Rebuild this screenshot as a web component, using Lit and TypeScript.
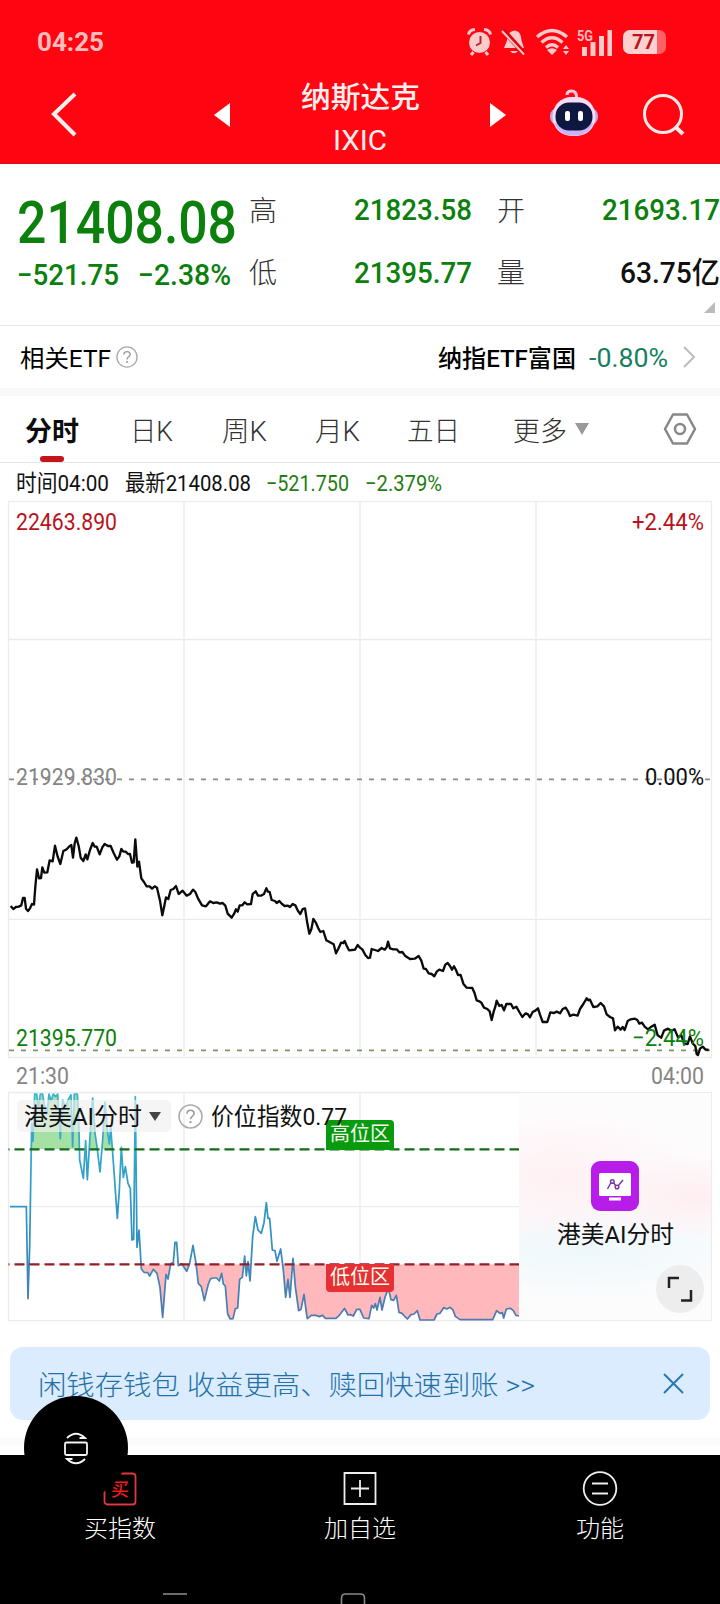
import { LitElement, html, svg, css } from "lit";
import { customElement } from "lit/decorators.js";

/** A line of text drawn in a box of given width, with its baseline at `base`. */
const fit = (text: string, w: number, size: number, h: number, base: number, cls = "") => html`
  <svg class="fit ${cls}" width=${w} height=${h}>
    <text x="0" y=${base} font-size=${size} textLength=${w} lengthAdjust="spacingAndGlyphs">${text}</text>
  </svg>`;

const label = (text: string, x: number, y: number, w: number, size: number, cls = "") => svg`
  <text class=${cls} x=${x} y=${y} font-size=${size} textLength=${w} lengthAdjust="spacingAndGlyphs">${text}</text>`;

/* Price samples, in thirds of a pixel from (0, 760). */
const PRICE =
  "32,438 40,447 48,441 56,440 64,436 69,414 74,414 78,446 84,453 90,445 96,432 102,434 106,380 111,328 117,355 123,354 127,322 133,338 142,337 149,301 158,304 165,257 173,290 181,312 190,273 200,268 207,260 214,255 219,293 224,250 229,233 236,258 242,293 250,303 257,283 262,298 270,270 278,249 284,260 290,260 299,283 307,262 314,252 324,258 332,258 341,279 351,299 358,289 364,267 370,275 377,275 384,282 390,282 396,308 401,307 406,238 412,320 417,305 424,355 432,366 440,379 449,379 456,386 464,379 471,383 480,422 487,466 493,437 498,412 505,417 512,390 520,387 528,378 536,402 548,392 560,407 570,402 579,389 586,396 594,415 606,436 618,439 630,424 640,429 650,427 660,431 668,429 676,437 683,461 695,473 702,462 708,448 713,455 719,436 727,436 734,427 742,433 753,432 758,402 767,394 774,407 783,407 792,402 799,385 804,395 809,396 815,420 825,423 830,429 838,423 846,432 854,438 864,437 870,441 878,432 886,436 894,453 901,462 908,447 915,445 922,490 928,521 934,508 940,477 947,487 955,505 961,516 970,513 979,541 990,547 1001,553 1008,580 1015,566 1023,548 1030,549 1034,543 1040,557 1047,571 1056,570 1065,569 1073,555 1080,563 " +
  "1087,568 1096,585 1104,594 1110,593 1115,567 1125,570 1134,573 1145,564 1154,569 1160,562 1164,545 1170,565 1180,568 1190,568 1198,577 1207,576 1215,587 1230,597 1244,596 1256,588 1264,602 1271,626 1278,627 1286,640 1295,642 1303,649 1310,635 1318,629 1329,633 1336,614 1343,609 1350,618 1356,629 1362,619 1368,630 1374,645 1382,645 1390,671 1400,683 1417,684 1424,700 1430,721 1438,724 1444,728 1452,743 1462,747 1469,754 1475,780 1481,755 1486,740 1490,722 1498,738 1505,735 1512,751 1519,732 1533,732 1540,745 1549,740 1558,756 1567,771 1577,760 1584,763 1590,772 1598,756 1606,752 1614,745 1620,764 1628,786 1642,786 1651,757 1662,759 1670,755 1680,760 1688,747 1697,743 1704,754 1710,768 1720,764 1733,767 1740,747 1750,732 1760,715 1766,721 1770,719 1780,741 1792,739 1802,729 1812,739 1820,763 1830,771 1839,775 1845,811 1853,800 1862,809 1868,801 1874,810 1883,783 1892,778 1905,776 1912,780 1918,791 1926,788 1934,800 1944,808 1954,800 1964,794 1973,826 1984,833 1992,812 2004,806 2014,812 2024,808 2034,832 2044,826 2052,850 2063,852 2070,829 2078,850 2086,858 2090,882 2094,885 2100,866 2108,860 2116,868 2126,870";

/* Indicator samples, in thirds of a pixel from (0, 1080). */
const INDEX =
  "30,380 79,380 84,656 89,500 95,130 99,184 104,42 110,42 115,84 121,42 128,42 134,84 141,100 147,42 153,62 160,42 167,50 173,42 181,176 188,60 196,85 203,62 213,44 218,200 223,42 232,42 236,110 239,240 250,295 257,182 262,299 270,170 278,54 285,160 291,200 300,276 308,180 315,66 322,150 328,192 332,140 341,260 352,415 358,330 364,202 370,292 376,260 384,310 391,326 396,480 401,478 406,50 411,502 417,450 424,567 432,577 443,578 449,588 455,577 460,568 471,580 480,622 488,712 498,583 504,597 512,552 520,547 525,487 530,487 535,557 545,551 560,574 569,550 579,496 588,550 595,610 604,620 613,662 625,612 632,596 642,594 650,594 658,603 665,580 670,612 676,618 683,702 691,717 699,716 706,686 713,684 719,598 727,592 734,528 739,588 744,545 750,603 758,470 766,410 774,450 784,460 792,428 799,368 804,415 809,415 817,510 825,512 831,544 842,507 850,570 857,652 864,598 870,652 879,535 886,620 896,692 903,688 912,643 918,690 922,716 934,706 948,706 958,710 968,706 976,715 1008,715 1018,706 1034,685 1044,705 1052,704 1060,708 1070,688 1080,688 " +
  "1091,714 1107,716 1115,676 1121,684 1126,671 1131,690 1140,652 1146,690 1155,652 1165,625 1173,659 1181,661 1189,646 1197,697 1206,700 1213,708 1222,717 1233,704 1242,702 1252,692 1260,720 1302,720 1311,702 1320,700 1331,683 1340,687 1350,682 1359,690 1366,709 1380,719 1478,719 1490,692 1500,700 1507,698 1511,714 1519,687 1532,685 1540,692 1548,706 1557,708";

const chevronLeft = svg`<path d="M24 3 3 23 24 44" fill="none" stroke="#fff0ee" stroke-width="4"/>`;

const help = (r: number) => html`
  <svg width=${r * 2 + 2} height=${r * 2 + 2} viewBox="-12 -12 24 24">
    <circle r="11" fill="none" stroke="#aaa" stroke-width="1.5"/>
    <path d="M-3.4-2.6C-3.4-7 3.6-7 3.5-2.8 3.4-.4 0 0 0 2.6" fill="none" stroke="#999" stroke-width="1.5"/>
    <circle cy="5.4" r="1.1" fill="#999"/>
  </svg>`;

@customElement("app-root")
export class AppRoot extends LitElement {
  static styles = css`
    :host {
      display: block;
      position: relative;
      width: 720px;
      height: 1604px;
      overflow: hidden;
      background: #fff;
      font-family: Roboto, "Noto Sans CJK SC", sans-serif;
    }
    * { box-sizing: border-box; }
    svg { display: block; flex: none; overflow: visible; }
    text { fill: currentColor; font-family: Roboto, "Noto Sans CJK SC", sans-serif; }
    .green { color: #0c800c; }
    .dark { color: #111; }
    .mid { font-weight: 500; }
    .bold { font-weight: 700; }
    .light { font-weight: 300; }
    .head { height: 164px; background: #ff0511; color: #fff0ee; border-bottom: 1px solid #d4121c; }
    .status { display: flex; align-items: center; height: 84px; padding: 0 53px 0 37px; color: #ffbcbc; }
    .status .grow { flex: 1; }
    .sicons { display: flex; gap: 10px; align-items: center; }
    .signal { margin-left: -3px; }
    .titlebar { display: grid; grid-template-columns: 214px 86px 190px 60px 93px 77px; height: 79px; }
    .back { padding: 7px 0 0 51px; }
    .tri { padding-top: 19px; }
    .title { width: 120px; display: flex; flex-direction: column; align-items: center; margin-top: -5px; }
    .robot { padding-top: 5px; }
    .search { padding-top: 9px; }
    .quote { height: 162px; display: grid; grid-template-columns: 237px 40px 195px 53px 195px; grid-template-rows: 79px 82px; border-bottom: 1px solid #e6e6e6; }
    .quote > div { display: flex; }
    .big { padding-left: 17px; }
    .right { justify-content: flex-end; }
    .key { justify-content: flex-end; color: #333; }
    .chg { padding-left: 17px; gap: 19px; }
    .vol { flex-direction: column; align-items: flex-end; }
    .corner { margin-right: 5px; margin-top: 19px; }
    .etf { height: 62px; display: flex; align-items: center; padding: 0 25px 0 20px; }
    .etf .q { margin-left: 5px; }
    .etf .grow { flex: 1; }
    .etf .pct { color: #168060; margin: 0 15px 0 13px; }
    .band { height: 8px; background: #f8f8f9; }
    .tabs { height: 67px; display: flex; border-bottom: 1px solid #e8e8e8; padding-left: 25px; color: #333; }
    .tab { width: 54px; height: 66px; display: flex; flex-direction: column; align-items: center; color: #0c0c0c; }
    .bar { width: 24px; height: 6px; border-radius: 3px; background: #c5151c; }
    .t1 { margin-left: 51px; }
    .t2 { margin-left: 49px; }
    .t3 { margin-left: 48px; }
    .t4 { margin-left: 47px; }
    .t5 { margin-left: 53px; }
    .drop { margin: 27px 0 0 8px; }
    .gear { margin: 17px 0 0 75px; }
    .info { height: 38px; display: flex; padding-left: 16px; color: #111; }
    .info .n1 { margin-left: 16px; }
    .info .n2 { margin-left: 15px; color: #1f7d12; }
    .info .n3 { margin-left: 16px; color: #1f7d12; }
    .red { color: #b8141d; }
    .grey { color: #858585; }
    .axis { height: 35px; padding: 0 16px; display: flex; justify-content: space-between; color: #858585; }
    .ind { position: relative; height: 230px; display: flex; padding-right: 8px; }
    .picker { position: absolute; left: 17px; top: 8px; display: flex; align-items: center; }
    .pill { display: flex; align-items: center; gap: 7px; width: 154px; height: 32px; padding-left: 7px; border-radius: 5px; background: rgba(240, 240, 240, .66); color: #111; }
    .picker .q { margin: 0 8px 0 7px; }
    .promo { width: 193px; height: 229px; border: 1px solid #ececec; border-left: 0; display: flex; flex-direction: column; align-items: center; padding-top: 68px;
      background: radial-gradient(ellipse 150px 70px at 20% 38%, #fff0f3 0, #fff3f500 100%), radial-gradient(ellipse 110px 44px at 92% 46%, #ffedf1 0, #fff0f300 100%), radial-gradient(ellipse 190px 52px at 35% 69%, #edf8fb 0, #f0f8fb00 100%), #fdfcfd; }
    .expand { align-self: flex-end; margin-right: 7px; margin-top: 11px; }
    .gap { height: 25px; }
    .banner { margin: 0 10px; height: 73px; border-radius: 13px; background: #daecfd; color: #2470a8; display: flex; align-items: center; padding: 0 26px 0 28px; justify-content: space-between; }
    .foot { height: 35px; background: linear-gradient(#fff 17px, #fafafa 18px, #fafafa 25px, #fff 26px); }
    .nav { height: 149px; background: #000; color: #fff; display: grid; grid-template-columns: 240px 240px 240px; grid-template-rows: 137px 12px; }
    .item { display: flex; flex-direction: column; align-items: center; padding-top: 16px; gap: 3px; }
    .sys { grid-column: 1 / 4; }
    .fab { position: absolute; left: 24px; top: 1396px; }
  `;

  render() {
    return html`
      <div class="head">
        <div class="status">
          ${fit("04:25", 67, 25, 30, 24, "bold")}
          <div class="grow"></div>
          <div class="sicons">
            <svg width="25" height="28" viewBox="0 0 25 28">
              <circle cx="12.5" cy="14.5" r="10.5" fill="#ffcaca"/>
              <path d="M1.5 6.5Q2.5 2 8 1.6M23.5 6.5Q22.5 2 17 1.6M6.5 24 4 27M18.5 24 21 27" stroke="#ffcaca" stroke-width="3" fill="none"/>
              <path d="M13.5 8v7L9 17.5" stroke="#b02830" stroke-width="2" fill="none"/>
            </svg>
            <svg width="24" height="26" viewBox="0 0 24 26">
              <path d="M12.5 1.500c6 1 6.500 5 7 10l2.500 7.500H2l3-7.500c.3-5 1.500-9 7.500-10zM8 22h8q-4 4.500-8 0z" fill="#ffcaca"/>
              <path d="M1 1 22.5 25" stroke="#e00510" stroke-width="5"/><path d="M0 2 22 25.5" stroke="#ffcaca" stroke-width="2"/>
            </svg>
            <svg width="34" height="26" viewBox="0 0 34 26">
              <g fill="none" stroke="#ffcaca" stroke-width="3.400"><path d="M1 8Q16-5 31 8"/><path d="M5.5 13.500Q16 4 26.500 13.500"/><path d="M10 18.500Q16 13 22 18.500"/></g>
              <path d="m11 21q5-3.500 10 0l-5 5z" fill="#ffcaca"/><path d="m27 20 3-4 3 4zM27 22h6l-3 4z" fill="#ffcaca"/>
            </svg>
            <svg width="36" height="27" viewBox="0 0 36 27" class="bold signal">
              <text x="0" y="12" font-size="14" textLength="16" lengthAdjust="spacingAndGlyphs">5G</text>
              <path d="M5 18h5v9H5zM13.500 13h5v14h-5zM22 7h5v20h-5zM30.500 1h4.500v26h-4.500z" fill="#ffcaca"/>
            </svg>
            <svg width="44" height="26" viewBox="0 0 44 26" class="bold">
              <rect y="1" width="43" height="24" rx="7" fill="#ff6066"/>
              <path d="M7 1h27v24H7a7 7 0 0 1-7-7V8a7 7 0 0 1 7-7z" fill="#ffd0d0"/>
              <text class="red" x="9" y="20" font-size="20" textLength="23">77</text>
            </svg>
          </div>
        </div>
        <div class="titlebar">
          <div class="back"><svg width="26" height="46">${chevronLeft}</svg></div>
          <div class="tri"><svg width="17" height="24"><path d="M0 12 16 0V24z" fill="#fff"/></svg></div>
          <div class="title">
            ${fit("纳斯达克", 119, 29, 33, 29, "mid")}
            ${fit("IXIC", 54, 27.5, 40, 38)}
          </div>
          <div class="tri"><svg width="17" height="24"><path d="M16 12 0 0V24z" fill="#fff"/></svg></div>
          <div class="robot">
            <svg width="50" height="48" viewBox="0 0 50 48">
              <path d="M17 6q0-4 4.500-4 5 0 5 6" fill="none" stroke="#f2c8dc" stroke-width="3"/>
              <rect x="0" y="19" width="48" height="17" rx="8" fill="#b9a8f4"/>
              <rect x="2.500" y="8" width="43" height="39" rx="19" fill="#f8dcf4"/>
              <path d="M5 34c4 17 34 17 38 0z" fill="#c9b4f8"/>
              <rect x="5.500" y="13.500" width="37" height="28" rx="13.500" fill="#0e1740"/>
              <rect x="15" y="22" width="5" height="10" rx="2.200" fill="#fff"/><rect x="28" y="22" width="5" height="10" rx="2.200" fill="#fff"/>
            </svg>
          </div>
          <div class="search"><svg width="42" height="44"><g fill="none" stroke="#ffe9e6" stroke-width="3"><circle cx="20" cy="21" r="18.500"/><path d="M32 33.500 40 41" stroke-width="4"/></g></svg></div>
        </div>
      </div>

      <div class="quote">
        <div class="big green">${fit("21408.08", 220, 60, 79, 79, "mid")}</div>
        <div class="key">${fit("高", 28, 28, 79, 57, "light")}</div>
        <div class="right green">${fit("21823.58", 118, 29.5, 79, 56, "mid")}</div>
        <div class="key">${fit("开", 28, 28, 79, 57, "light")}</div>
        <div class="right green">${fit("21693.17", 118, 29.5, 79, 56, "mid")}</div>
        <div class="chg green">${fit("−521.75", 102, 29.5, 82, 42, "mid")}${fit("−2.38%", 93, 29.5, 82, 42, "mid")}</div>
        <div class="key">${fit("低", 28, 28, 82, 40, "light")}</div>
        <div class="right green">${fit("21395.77", 118, 29.5, 82, 40, "mid")}</div>
        <div class="key">${fit("量", 28, 28, 82, 40, "light")}</div>
        <div class="vol dark">${fit("63.75亿", 100, 29.5, 40, 40, "mid")}
          <svg class="corner" width="11" height="11"><path d="M11 0v11H0z" fill="#bbb"/></svg></div>
      </div>

      <div class="etf">
        ${fit("相关ETF", 91, 24, 62, 41)}
        <div class="q">${help(10)}</div>
        <div class="grow"></div>
        ${fit("纳指ETF富国", 138, 24, 62, 41, "mid")}
        ${fit("-0.80%", 79, 25.5, 62, 41, "pct")}
        <svg width="12" height="22"><path d="M1 1 11 11 1 21" fill="none" stroke="#bbb" stroke-width="2"/></svg>
      </div>
      <div class="band"></div>

      <div class="tabs">
        <div class="tab">${fit("分时", 54, 27, 60, 45, "bold")}<div class="bar"></div></div>
        <div class="t1">${fit("日K", 43, 27, 60, 45, "light")}</div>
        <div class="t2">${fit("周K", 45, 27, 60, 45, "light")}</div>
        <div class="t3">${fit("月K", 45, 27, 60, 45, "light")}</div>
        <div class="t4">${fit("五日", 53, 27, 60, 45, "light")}</div>
        <div class="t5">${fit("更多", 54, 27, 60, 45, "light")}</div>
        <svg class="drop" width="14" height="12"><path d="M0 0h14L7 12z" fill="#999"/></svg>
        <svg class="gear" width="32" height="32"><g fill="none" stroke="#888" stroke-width="2.500"><path d="M9 1.500H23L31 16 23 30.500H9L1 16z" stroke-linejoin="round"/><circle cx="16" cy="16" r="5"/></g></svg>
      </div>

      <div class="info">
        ${fit("时间04:00", 93, 22.5, 38, 28)}
        ${fit("最新21408.08", 126, 22.5, 38, 28, "n1")}
        ${fit("−521.750", 83, 22.5, 38, 28, "n2")}
        ${fit("−2.379%", 77, 22.5, 38, 28, "n3")}
      </div>

      <svg width="720" height="556" viewBox="0 501 720 556">
        <g fill="none" stroke="#ebebeb" stroke-width="1.300">
          <rect x="8.500" y="501.500" width="703" height="556"/>
          <path d="M184 501.500V1057M360 501.500V1057M536 501.500V1057M8.500 639.500H711.500M8.500 919.300H711.500"/>
        </g>
        <path d="M9 779.300H711" stroke="#8c8c8c" stroke-width="1.700" stroke-dasharray="5 7"/>
        <path d="M9 1050.300H711" stroke="#7d9464" stroke-width="1.700" stroke-dasharray="5 7"/>
        <g transform="translate(0 760) scale(.33333)">
          <polyline points=${PRICE} fill="none" stroke="#0b0b0b" stroke-width="7" stroke-linejoin="round"/>
        </g>
        ${label("22463.890", 16, 530, 101, 24, "red")}
        ${label("+2.44%", 632, 530, 72, 24, "red")}
        ${label("21929.830", 16, 785, 101, 24, "grey")}
        ${label("0.00%", 645, 785, 59, 24, "dark")}
        ${label("21395.770", 16, 1046, 101, 24, "green")}
        ${label("−2.44%", 632, 1046, 72, 24, "green")}
      </svg>

      <div class="axis">${fit("21:30", 53, 24, 35, 27)}${fit("04:00", 53, 24, 35, 27)}</div>

      <div class="ind">
        <svg width="519" height="229" viewBox="0 1092 519 229">
          <defs>
            <linearGradient id="line" gradientUnits="userSpaceOnUse" x1="0" y1="40" x2="0" y2="720"><stop offset="0" stop-color="#38b4d2"/><stop offset=".6" stop-color="#2f93c4"/><stop offset="1" stop-color="#5378ae"/></linearGradient>
            <clipPath id="hi"><rect x="0" y="0" width="1557" height="208"/></clipPath>
            <clipPath id="lo"><rect x="0" y="553" width="1557" height="180"/></clipPath>
          </defs>
          <path d="M8.500 1321V1092.500H519M8.500 1320.700H519M184 1092.500V1320M360 1092.500V1320M8.500 1206.700H519" fill="none" stroke="#ebebeb" stroke-width="1.300"/>
          <g transform="translate(0 1080) scale(.33333)">
            <polygon points="95,208 ${INDEX.slice(INDEX.indexOf("95,130"))} 1557,208" fill="#a5e0a5" clip-path="url(#hi)"/>
            <polygon points="30,553 ${INDEX} 1557,553" fill="#ffb9bc" clip-path="url(#lo)"/>
            <polyline points=${INDEX} fill="none" stroke="url(#line)" stroke-width="5.200" stroke-linejoin="round"/>
          </g>
          <path d="M8.500 1149.300H519" stroke="#146b18" stroke-width="2.200" stroke-dasharray="10 5" stroke-dashoffset="9"/>
          <path d="M8.500 1264.300H519" stroke="#902026" stroke-width="2.200" stroke-dasharray="10 5" stroke-dashoffset="9"/>
          <path d="M326 1150v-26q0-4 4-4h60q4 0 4 4v26z" fill="#0a9a0e"/>
          <path d="M326 1264h68v24q0 4-4 4h-60q-4 0-4-4z" fill="#e63034"/>
          <g color="#f4fff0">${label("高位区", 330, 1141, 60, 20)}${label("低位区", 330, 1284, 60, 20)}</g>
        </svg>
        <div class="promo">
          <svg width="48" height="50" viewBox="0 0 48 50">
            <rect width="48" height="50" rx="9" fill="#b71ce9"/><rect x="8" y="12" width="32" height="23" rx="1.500" fill="#fff"/><rect x="18" y="36.500" width="12" height="3" fill="#fff"/>
            <g fill="none" stroke="#7c3a9c" stroke-width="1.500"><path d="M16.500 28 20 21.500M22.500 21.500 24.500 24.500M27.500 24.500 32 19"/><circle cx="21.300" cy="20.500" r="1.800"/><circle cx="26" cy="26" r="1.800"/></g>
          </svg>
          ${fit("港美AI分时", 117, 24, 43, 32, "dark")}
          <svg class="expand" width="48" height="48"><circle cx="24" cy="24" r="24" fill="#ededed"/><path d="M13 23V13H23M25 35.500H35V25" fill="none" stroke="#222" stroke-width="2.500"/></svg>
        </div>
        <div class="picker">
          <div class="pill">${fit("港美AI分时", 118, 24, 32, 25)}<svg width="12" height="9"><path d="M0 0h12L6 9z" fill="#444"/></svg></div>
          <div class="q">${help(11.5)}</div>
          ${fit("价位指数0.77", 136, 24, 32, 25, "dark")}
        </div>
      </div>

      <div class="gap"></div>
      <div class="banner">
        ${fit("闲钱存钱包 收益更高、赎回快速到账 >>", 497, 27.5, 73, 48, "light")}
        <svg width="21" height="21"><path d="M1 1 20 20M20 1 1 20" stroke="#2b78ae" stroke-width="2"/></svg>
      </div>
      <div class="foot"></div>

      <div class="nav">
        <div class="item">
          <svg width="34" height="36"><rect x="1.500" y="2.500" width="31" height="31" rx="3" fill="none" stroke="#e0383c" stroke-width="1.800"/><g color="#f0181c" class="mid">${label("买", 8, 25, 18, 18)}</g></svg>
          ${fit("买指数", 72, 24, 34, 27, "light")}
        </div>
        <div class="item">
          <svg width="34" height="36"><path d="M1.500 2h31v31h-31zM17 9V26M8 17.500H26" fill="none" stroke="#eee" stroke-width="1.800"/></svg>
          ${fit("加自选", 72, 24, 34, 27, "light")}
        </div>
        <div class="item">
          <svg width="34" height="36"><g fill="none" stroke="#eee" stroke-width="1.800"><circle cx="17" cy="17.500" r="16.300"/><path d="M9 12.500H25M9 22.500H25"/></g></svg>
          ${fit("功能", 48, 24, 34, 27, "light")}
        </div>
        <svg class="sys" width="720" height="12"><g fill="none" stroke="#888" stroke-width="1.600"><path d="M163 2H187"/><path d="M341.500 14V6q0-4 4-4h15q4 0 4 4v8"/></g></svg>
      </div>

      <svg class="fab" width="104" height="104">
        <circle cx="52" cy="52" r="52" fill="#000"/>
        <g fill="none" stroke="#f4f4f4" stroke-width="1.800"><rect x="41" y="46.500" width="22" height="12.500" rx="1.500"/><path d="M43 42Q52 33.500 61 42H55.500M61 63Q52 71.500 43 63H48.500"/></g>
      </svg>
    `;
  }
}
